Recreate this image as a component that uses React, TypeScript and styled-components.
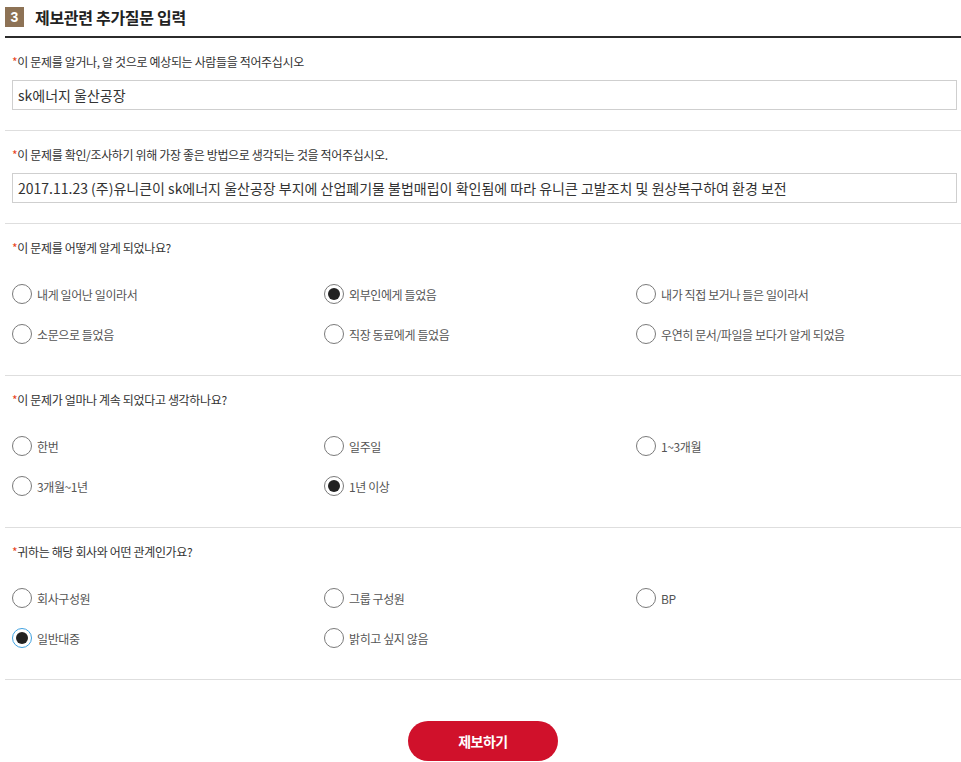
import React, { useState } from 'react';
import styled, { createGlobalStyle } from 'styled-components';

const GlobalStyle = createGlobalStyle`
    html, body {
        margin: 0;
        padding: 0;
        background: #fff;
    }
    body {
        font-family: "Malgun Gothic", "Noto Sans CJK KR", "Noto Sans", sans-serif;
        color: #333;
    }
`;

const Wrap = styled.div`
    padding-left: 5px;
`;

const Header = styled.div`
    display: flex;
    align-items: center;
    gap: 11px;
    height: 38px;
    padding-bottom: 2px;
    border-bottom: 2px solid #2b2b2b;
    box-sizing: border-box;
`;

const Badge = styled.span`
    width: 19px;
    height: 20px;
    display: flex;
    align-items: center;
    justify-content: center;
    background-color: #8d7255;
    color: #fff;
    font-family: "Liberation Sans", Arial, sans-serif;
    font-weight: bold;
    font-size: 14px;
`;

const Title = styled.h2`
    margin: 0;
    font-size: 16px;
    font-weight: bold;
    color: #222;
    letter-spacing: -0.3px;
`;

const Section = styled.div<{ $radio?: boolean }>`
    padding: 16px 4px ${p => (p.$radio ? '21px' : '20px')} 7px;
    border-bottom: 1px solid #dedede;
`;

const Label = styled.p`
    margin: 0;
    font-size: 12px;
    line-height: 16px;
    color: #333;
    letter-spacing: -0.35px;
`;

const Star = styled.span`
    color: #e8441e;
`;

const TextInput = styled.input`
    display: block;
    box-sizing: border-box;
    width: 100%;
    height: 30px;
    margin-top: 10px;
    padding: 0 5px;
    border: 1px solid #cfcfcf;
    font-family: inherit;
    font-size: 14px;
    color: #333;
    letter-spacing: 0;
    outline: none;
`;

const Options = styled.div`
    display: grid;
    grid-template-columns: repeat(3, 312px);
    grid-auto-rows: 40px;
    margin-top: 18px;
`;

const Option = styled.label`
    display: flex;
    align-items: center;
    gap: 5px;
    cursor: pointer;
    font-size: 12px;
    color: #555;
    letter-spacing: -0.4px;
`;

const Circle = styled.span<{ $on: boolean; $focus?: boolean }>`
    width: 20px;
    height: 20px;
    box-sizing: border-box;
    border-radius: 50%;
    border: 1px solid ${p => (p.$focus ? '#3fa1e0' : '#7a7a7a')};
    display: flex;
    align-items: center;
    justify-content: center;
    flex-shrink: 0;

    &::after {
        content: '';
        width: 12px;
        height: 12px;
        border-radius: 50%;
        background: #222;
        display: ${p => (p.$on ? 'block' : 'none')};
    }
`;

const Footer = styled.div`
    display: flex;
    justify-content: center;
    padding-top: 41px;
`;

const SubmitBtn = styled.button`
    width: 150px;
    height: 40px;
    border: none;
    border-radius: 20px;
    background-color: #d0112b;
    color: #fff;
    font-family: inherit;
    font-size: 14px;
    font-weight: bold;
    letter-spacing: -0.5px;
    cursor: pointer;
`;

type Q = { name: string; label: string; options: string[]; focus?: boolean };

const questions: Q[] = [
    {
        name: 'how',
        label: '이 문제를 어떻게 알게 되었나요?',
        options: ['내게 일어난 일이라서', '외부인에게 들었음', '내가 직접 보거나 들은 일이라서', '소문으로 들었음', '직장 동료에게 들었음', '우연히 문서/파일을 보다가 알게 되었음'],
    },
    {
        name: 'long',
        label: '이 문제가 얼마나 계속 되었다고 생각하나요?',
        options: ['한번', '일주일', '1~3개월', '3개월~1년', '1년 이상'],
    },
    {
        name: 'rel',
        label: '귀하는 해당 회사와 어떤 관계인가요?',
        options: ['회사구성원', '그룹 구성원', 'BP', '일반대중', '밝히고 싶지 않음'],
        focus: true,
    },
];

const App = () => {
    const [picked, setPicked] = useState<Record<string, string>>({
        how: '외부인에게 들었음',
        long: '1년 이상',
        rel: '일반대중',
    });

    return (
        <Wrap>
            <GlobalStyle />
            <Header>
                <Badge>3</Badge>
                <Title>제보관련 추가질문 입력</Title>
            </Header>

            <Section>
                <Label><Star>*</Star>이 문제를 알거나, 알 것으로 예상되는 사람들을 적어주십시오</Label>
                <TextInput defaultValue="sk에너지 울산공장" />
            </Section>

            <Section>
                <Label><Star>*</Star>이 문제를 확인/조사하기 위해 가장 좋은 방법으로 생각되는 것을 적어주십시오.</Label>
                <TextInput defaultValue="2017.11.23 (주)유니큰이 sk에너지 울산공장 부지에 산업폐기물 불법매립이 확인됨에 따라 유니큰 고발조치 및 원상복구하여 환경 보전" />
            </Section>

            {questions.map(q => (
                <Section key={q.name} $radio>
                    <Label><Star>*</Star>{q.label}</Label>
                    <Options>
                        {q.options.map(o => (
                            <Option key={o} onClick={() => setPicked({ ...picked, [q.name]: o })}>
                                <Circle $on={picked[q.name] === o} $focus={q.focus && picked[q.name] === o} />
                                {o}
                            </Option>
                        ))}
                    </Options>
                </Section>
            ))}

            <Footer>
                <SubmitBtn>제보하기</SubmitBtn>
            </Footer>
        </Wrap>
    );
};

export default App;
